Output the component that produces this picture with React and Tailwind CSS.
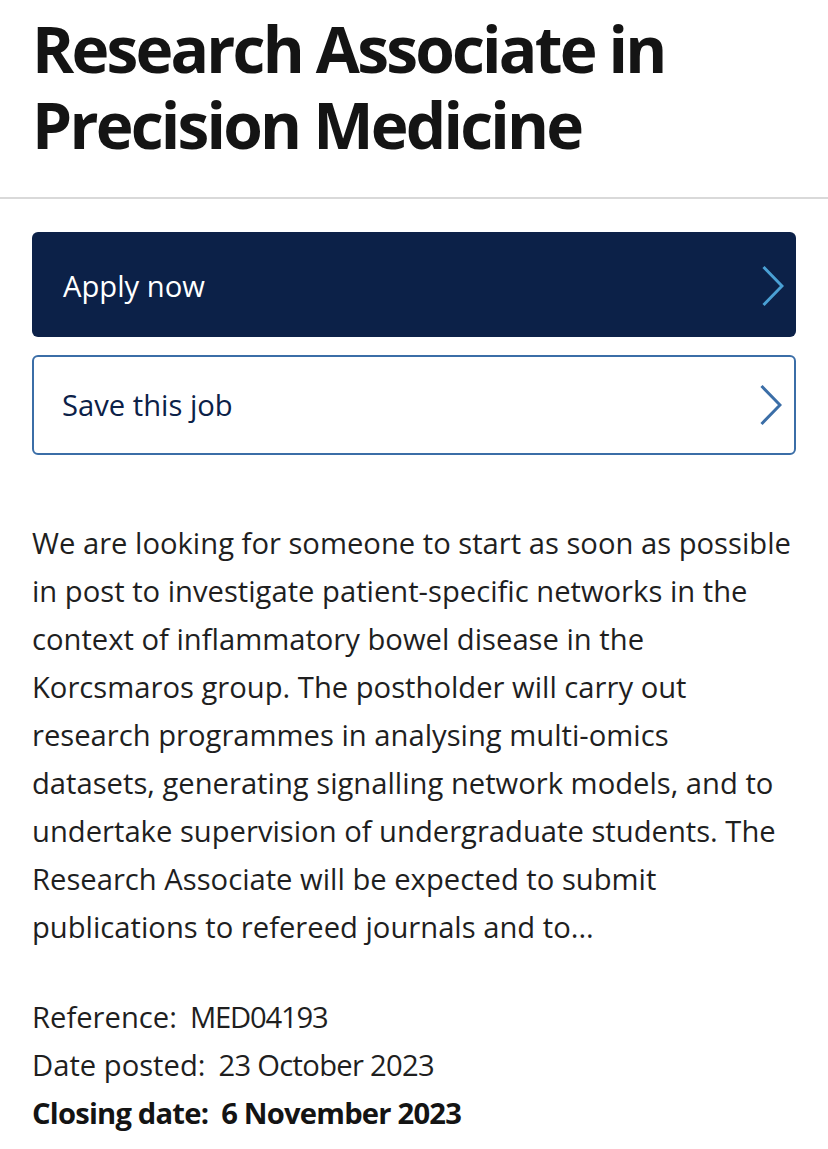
import React from "react";

const bodyLines = [
  "We are looking for someone to start as soon as possible",
  "in post to investigate patient-specific networks in the",
  "context of inflammatory bowel disease in the",
  "Korcsmaros group. The postholder will carry out",
  "research programmes in analysing multi-omics",
  "datasets, generating signalling network models, and to",
  "undertake supervision of undergraduate students. The",
  "Research Associate will be expected to submit",
  "publications to refereed journals and to...",
];

function Chevron({ color }) {
  return (
    <svg width="22" height="42" viewBox="0 0 22 42" fill="none" aria-hidden="true">
      <polyline
        points="1.5,2 20,21 1.5,40"
        stroke={color}
        strokeWidth="3"
        strokeLinecap="butt"
        strokeLinejoin="miter"
      />
    </svg>
  );
}

export default function App() {
  return (
    <div
      className="min-h-[1149px] w-full bg-white text-[#1f1f1f]"
      style={{ fontFamily: '"Open Sans", "Noto Sans", sans-serif' }}
    >
      <header className="border-b-2 border-[#d9d9d9] px-8 pt-[11px] pb-[34px]">
        <h1 className="text-[64px] font-bold leading-[76px] tracking-[-2.8px] text-[#141414]">
          Research Associate in
          <br />
          Precision Medicine
        </h1>
      </header>

      <main className="px-8 pt-[33px]">
        <div className="flex flex-col gap-[18px]">
          <a
            href="#"
            className="flex h-[105px] items-center justify-between rounded-md bg-[#0c2148] pt-[3px] pl-[31px] pr-[12px] text-[29.2px] leading-[48px] text-white"
          >
            <span>Apply now</span>
            <Chevron color="#4aa0d4" />
          </a>
          <a
            href="#"
            className="flex h-[100px] items-center justify-between rounded-md border-2 border-[#3b6ea7] bg-white pl-[28px] pr-[12px] text-[29.2px] leading-[48px] text-[#0c2148]"
          >
            <span>Save this job</span>
            <Chevron color="#3b6ea7" />
          </a>
        </div>

        <p className="mt-[64px] text-[29.2px] leading-[48px]">
          {bodyLines.map((l, i) => (
            <span key={i} className="block whitespace-nowrap">
              {l}
            </span>
          ))}
        </p>

        <dl className="mt-[42px] text-[29.2px] leading-[48px]">
          <div className="flex">
            <dt>Reference:</dt>
            <dd className="ml-[13px] tracking-[-1.2px]">MED04193</dd>
          </div>
          <div className="flex">
            <dt>Date posted:</dt>
            <dd className="ml-[13px] tracking-[-0.7px]">23 October 2023</dd>
          </div>
          <div className="flex font-bold tracking-[-0.8px] text-[#141414]">
            <dt>Closing date:</dt>
            <dd className="ml-[13px]">6 November 2023</dd>
          </div>
        </dl>
      </main>
    </div>
  );
}
